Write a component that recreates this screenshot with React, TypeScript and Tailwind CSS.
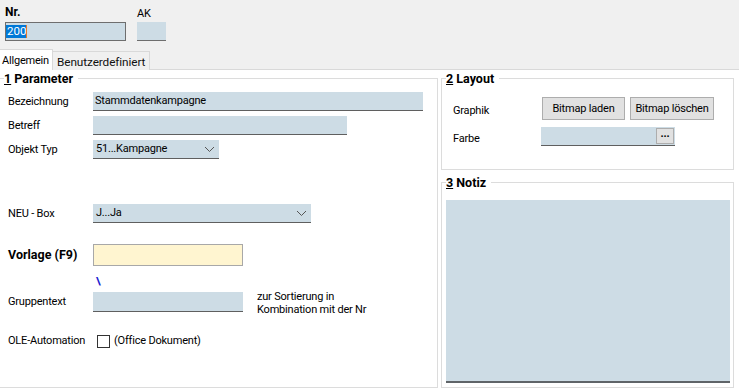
import React from "react";

const F = { fontFamily: "Roboto, 'Liberation Sans', sans-serif" };

function Group({ title, num, className, children }: { title: string; num: string; className: string; children?: React.ReactNode }) {
  return (
    <div className={"relative border border-[#dcdcdc] " + className}>
      <div className="absolute left-[4px] top-[-8px] bg-white pr-[5px] text-[12.5px] tracking-[0px] font-bold leading-[15px] text-black whitespace-nowrap">
        <span className="underline">{num}</span> {title}
      </div>
      {children}
    </div>
  );
}

function Chevron() {
  return (
    <svg width="11" height="7" viewBox="0 0 11 7" className="text-[#555]">
      <path d="M1 1 L5.5 5.5 L10 1" fill="none" stroke="currentColor" strokeWidth="1" />
    </svg>
  );
}

export default function App() {
  return (
    <div className="w-[739px] h-[390px] bg-white overflow-hidden text-[11px] tracking-[-0.2px] text-black leading-[14px] whitespace-nowrap" style={F}>
      {/* header */}
      <div className="h-[70px] bg-[#f0f0f0] flex flex-col border-b border-[#d9d9d9]">
        <div className="flex pl-[5px] pt-[5px] gap-[11px]">
          <div className="flex flex-col w-[121px]">
            <div className="font-bold h-[17px] leading-[14px] text-[12px] tracking-[0px]">Nr.</div>
            <div className="h-[19px] border border-[#6e6e6e] bg-[#cddce5] flex items-center pl-[0px]">
              <span className="bg-[#0078d7] text-white leading-[13px] pl-[1px] text-[11.5px] tracking-[0px]">200</span>
              <span className="w-[1px] h-[13px] bg-[#e87a2a]" />
            </div>
          </div>
          <div className="flex flex-col w-[29px]">
            <div className="h-[17px] pt-[2px]">AK</div>
            <div className="h-[19px] bg-[#cddce5] border-b border-[#6e6e6e]" />
          </div>
        </div>
        <div className="flex mt-auto h-[21px] mb-[-1px]">
          <div className="w-[53px] h-[21px] bg-white border-r border-t border-[#d9d9d9] pl-[2px] pt-[4px] relative z-10">Allgemein</div>
          <div className="w-[97px] h-[19px] mt-[2px] bg-[#f0f0f0] border-r border-t border-[#d9d9d9] pl-[4px] pt-[3px] text-[#111] text-[11.8px] tracking-[-0.1px]">Benutzerdefiniert</div>
        </div>
      </div>

      {/* body */}
      <div className="flex pt-[8px]">
        <Group num="1" title="Parameter" className="w-[438px] h-[310px] border-l-0">
          <div className="flex flex-col pl-[8px]">
            <div className="flex items-center mt-[13px] h-[19px]">
              <div className="w-[85px]">Bezeichnung</div>
              <div className="w-[330px] h-[19px] bg-[#cddce5] border-b border-[#5f5f5f] pl-[2px] pt-[2px]">Stammdatenkampagne</div>
            </div>
            <div className="flex items-center mt-[5px] h-[19px]">
              <div className="w-[85px]">Betreff</div>
              <div className="w-[254px] h-[19px] bg-[#cddce5] border-b border-[#5f5f5f]" />
            </div>
            <div className="flex items-center mt-[5px] h-[19px]">
              <div className="w-[85px]">Objekt Typ</div>
              <div className="w-[126px] h-[19px] bg-[#cddce5] border-b border-[#5f5f5f] flex items-center justify-between pl-[3px] pr-[4px]">
                <span>51...Kampagne</span>
                <Chevron />
              </div>
            </div>
            <div className="flex items-center mt-[45px] h-[19px]">
              <div className="w-[85px]">NEU - Box</div>
              <div className="w-[218px] h-[19px] bg-[#cddce5] border-b border-[#5f5f5f] flex items-center justify-between pl-[3px] pr-[4px]">
                <span>J...Ja</span>
                <Chevron />
              </div>
            </div>
            <div className="flex items-center mt-[21px] h-[22px]">
              <div className="w-[85px] font-bold text-[12.5px] tracking-[0px]">Vorlage (F9)</div>
              <div className="w-[150px] h-[22px] bg-[#fff5d0] border border-[#a8a8a8]" />
            </div>
            <div className="h-[16px] mt-[8px] pl-[88px] text-[#2020d0] font-bold leading-[16px]">\</div>
            <div className="flex items-center mt-[2px] h-[20px]">
              <div className="w-[85px]">Gruppentext</div>
              <div className="w-[150px] h-[20px] bg-[#cddce5] border-b border-[#5f5f5f]" />
              <div className="ml-[14px] leading-[13px] pt-[1px]">
                zur Sortierung in<br />Kombination mit der Nr
              </div>
            </div>
            <div className="flex items-center mt-[22px] h-[14px]">
              <div className="w-[89px]">OLE-Automation</div>
              <div className="w-[13px] h-[13px] border border-[#333] bg-white" />
              <div className="ml-[4px]">(Office Dokument)</div>
            </div>
          </div>
        </Group>

        <div className="flex flex-col ml-[3px] w-[293px]">
          <Group num="2" title="Layout" className="h-[92px]">
            <div className="flex flex-col pl-[11px]">
              <div className="flex mt-[18px] h-[23px]">
                <div className="w-[89px] pt-[7px]">Graphik</div>
                <div className="w-[83px] h-[23px] bg-[#e1e1e1] border border-[#adadad] flex items-center justify-center">Bitmap laden</div>
                <div className="w-[84px] h-[23px] ml-[5px] bg-[#e1e1e1] border border-[#adadad] flex items-center justify-center">Bitmap löschen</div>
              </div>
              <div className="flex mt-[7px] h-[19px]">
                <div className="w-[88px] pt-[5px]">Farbe</div>
                <div className="w-[134px] h-[19px] bg-[#cddce5] border-b border-[#5f5f5f] flex justify-end pt-[1px] pr-[1px]">
                  <div className="w-[18px] h-[16px] bg-[#e1e1e1] border border-[#adadad] flex items-center justify-center font-bold leading-[8px] pb-[4px] text-[11px]">...</div>
                </div>
              </div>
            </div>
          </Group>
          <Group num="3" title="Notiz" className="h-[206px] mt-[12px]">
            <div className="mt-[17px] ml-[4px] mr-[3px] h-[183px] bg-[#cddce5] border-b-2 border-[#5f6468]" />
          </Group>
        </div>
      </div>
    </div>
  );
}
